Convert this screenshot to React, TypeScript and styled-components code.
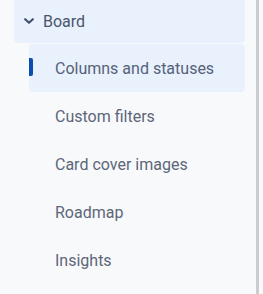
import React from "react";
import styled, { createGlobalStyle } from "styled-components";

const Global = createGlobalStyle`
  html, body { margin: 0; padding: 0; background: #f8f9fb; }
  body { font-family: "Segoe UI", Roboto, "Open Sans", sans-serif; }
`;

const Sidebar = styled.nav`
  width: 259px;
  height: 294px;
  box-sizing: border-box;
  border-right: 3px solid #cbcccf;
  background: #f8f9fb;
  overflow: hidden;
  display: flex;
  flex-direction: column;
`;

const Group = styled.div`
  margin: 0 11px 0 14px;
  height: 43px;
  border-radius: 0 0 4px 4px;
  background: #e9f1fc;
  display: flex;
  align-items: center;
  padding-left: 10px;
  gap: 9px;
  color: #4a566d;
  font-size: 16px;
`;

const List = styled.ul`
  list-style: none;
  margin: 1px 11px 0 29px;
  padding: 0;
  display: flex;
  flex-direction: column;
`;

const Item = styled.li<{ $active?: boolean }>`
  position: relative;
  height: 48px;
  display: flex;
  align-items: center;
  padding-left: 26px;
  border-radius: 4px;
  font-size: 16px;
  color: ${(p) => (p.$active ? "#55627a" : "#5d6679")};
  background: ${(p) => (p.$active ? "#e9f1fc" : "transparent")};
`;

const Marker = styled.span`
  position: absolute;
  left: 0;
  top: 14px;
  width: 4px;
  height: 18px;
  border-radius: 0 2px 2px 0;
  background: #0b4fae;
`;

const Chevron = () => (
  <svg width="10" height="7" viewBox="0 0 10 7" aria-hidden>
    <path d="M1.2 1.2 L5 4.8 L8.8 1.2" fill="none" stroke="#44546f" strokeWidth="2.2" strokeLinecap="round" strokeLinejoin="round" />
  </svg>
);

const items = ["Columns and statuses", "Custom filters", "Card cover images", "Roadmap", "Insights"];

export default function App() {
  return (
    <>
      <Global />
      <Sidebar>
        <Group>
          <Chevron />
          <span>Board</span>
        </Group>
        <List>
          {items.map((t, i) => (
            <Item key={t} $active={i === 0}>
              {i === 0 && <Marker />}
              {t}
            </Item>
          ))}
        </List>
      </Sidebar>
    </>
  );
}
